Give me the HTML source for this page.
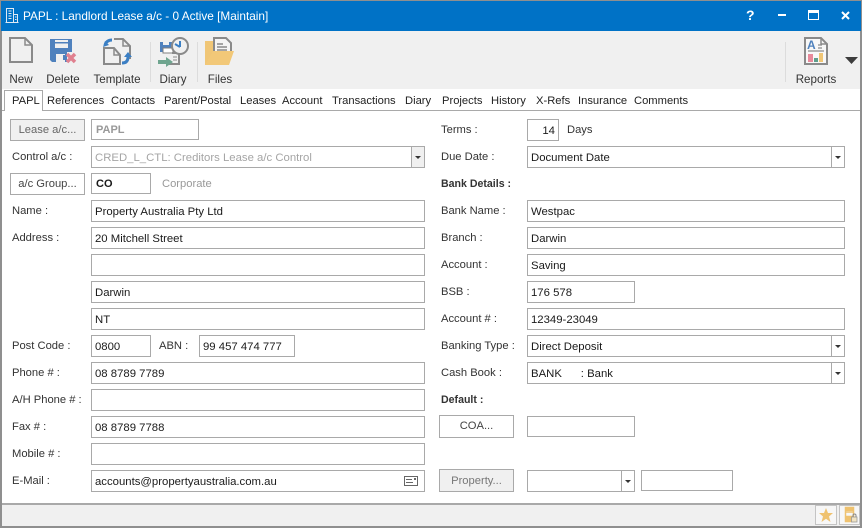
<!DOCTYPE html>
<html><head><meta charset="utf-8">
<style>
html,body{margin:0;padding:0;background:#fff}
#w{position:relative;width:862px;height:528px;overflow:hidden;background:#fff;font-family:"Liberation Sans",sans-serif;font-size:11.2px;color:#222}
#w div{position:absolute;box-sizing:border-box;white-space:pre}
#w svg{position:absolute;overflow:visible}
.l{color:#333;height:16px;line-height:16px}
.i{border:1px solid #a9a9a9;background:#fff;padding-left:3px;color:#1a1a1a;line-height:22px;font-size:11.35px}
.b{border:1px solid #a9a9a9;background:#fff;text-align:center;color:#444;line-height:20px}
.t{height:16px;line-height:16px;color:#222;top:93px}
.c{color:#333;text-align:center;height:16px;line-height:16px;top:72px;font-size:11.6px}
.a{width:13px;top:0;bottom:0;right:0;border-left:1px solid #a9a9a9}
.a:after{content:"";position:absolute;left:3px;top:9px;border:3px solid transparent;border-top:3px solid #333;border-bottom:0}
</style></head><body><div id="w">
<div style="left:0;top:0;width:862px;height:528px;border:2px solid #8f8f8f;border-top:1px solid #8f8f8f"></div>
<div style="left:1px;top:1px;width:860px;height:30px;background:#0072c6"></div>
<svg style="left:5px;top:8px" width="14" height="15" viewBox="0 0 14 15" fill="none" stroke="#dfeaf5" stroke-width="1"><path d="M1.5 14.5V.5H8.5V14.5M8.5 6.5H12.5V14.5M.5 14.5H13.5M3.5 3H6.5M3.5 5.5H6.5M3.5 8H6.5M3.5 10.500H6.5M10 9H11.500M10 11.500H11.500"/></svg>
<div style="left:23px;top:8px;height:16px;line-height:16px;color:#fff;font-size:11.8px">PAPL : Landlord Lease a/c - 0 Active [Maintain]</div>
<div style="left:746px;top:6px;color:#fff;font-weight:bold;font-size:14px;height:18px;line-height:18px">?</div>
<div style="left:778px;top:14px;width:8px;height:2px;background:#fff"></div>
<div style="left:808px;top:10px;width:11px;height:10px;border:1px solid #fff;border-top:3px solid #fff"></div>
<svg style="left:841px;top:11px" width="9" height="9"><path d="M1 1L8 8M8 1L1 8" stroke="#fff" stroke-width="2"/></svg>

<div style="left:2px;top:31px;width:858px;height:58px;background:#f0f0f0"></div>
<!-- New -->
<svg style="left:9px;top:37px" width="24" height="26" fill="none"><path d="M1 1H16L23 8V25H1Z" stroke="#8a8a8a" stroke-width="2"/><path d="M16 1V8H23" stroke="#8a8a8a" stroke-width="1.500"/></svg>
<div class="c" style="left:1px;width:40px">New</div>
<!-- Delete -->
<svg style="left:50px;top:38px" width="27" height="27"><path d="M0 1H22V14H17V24H2L0 22Z" fill="#4f81bd"/><rect x="5" y="2" width="13" height="8" fill="#f0f0f0"/><rect x="5" y="4" width="13" height="1.500" fill="#4f81bd"/><rect x="6" y="16" width="9" height="8" fill="#f0f0f0"/><rect x="13" y="17" width="2" height="5" fill="#4f81bd"/><path d="M17 16L25 24M25 16L17 24" stroke="#e0808f" stroke-width="3.500"/></svg>
<div class="c" style="left:43px;width:40px">Delete</div>
<!-- Template -->
<svg style="left:102px;top:37px" width="30" height="30" fill="none"><path d="M12 2H21L28 9V22" stroke="#8a8a8a" stroke-width="2"/><path d="M21 2V9H28" stroke="#8a8a8a" stroke-width="1.500"/><path d="M2 11V27H18V18L12 11Z" stroke="#8a8a8a" stroke-width="2"/><path d="M12 11V18H18" stroke="#8a8a8a" stroke-width="1.500"/><path d="M1 10L7 8L3 4Z" fill="#3b7fc4"/><path d="M10 3C6 3 4 5 3 8" stroke="#3b7fc4" stroke-width="3"/><path d="M20 26C24 26 26 24 26 20" stroke="#3b7fc4" stroke-width="3"/><path d="M22 20L26 15L30 20Z" fill="#3b7fc4"/></svg>
<div class="c" style="left:87px;width:60px">Template</div>
<div style="left:150px;top:42px;width:1px;height:40px;background:#dcdcdc"></div>
<!-- Diary -->
<svg style="left:158px;top:37px" width="31" height="30" fill="none"><path d="M2 5H14V15H2Z" fill="#4f81bd"/><rect x="5" y="5" width="6" height="3" fill="#f0f0f0"/><rect x="5" y="11" width="10" height="5" fill="#fff" stroke="#7f7f7f"/><path d="M14 16H21V27H11" stroke="#8a8a8a" stroke-width="2"/><path d="M15 20H19M15 23H19" stroke="#8a8a8a"/><circle cx="22" cy="9" r="8" fill="#f0f0f0" stroke="#8a8a8a" stroke-width="2"/><path d="M22 10V4M22 10L17 7" stroke="#3b7fc4" stroke-width="2"/><path d="M0 23H8V20L15 25L8 30V27H0Z" fill="#6fa58f"/></svg>
<div class="c" style="left:153px;width:40px">Diary</div>
<div style="left:197px;top:42px;width:1px;height:40px;background:#dcdcdc"></div>
<!-- Files -->
<svg style="left:205px;top:37px" width="30" height="30"><path d="M0 4H8V28H0Z" fill="#f0c676"/><path d="M9 1H21L26 6V17H9Z" fill="#f4f4f4" stroke="#8a8a8a" stroke-width="2"/><path d="M12 7H18M12 10H22M12 13H22" stroke="#8a8a8a" stroke-width="1.500"/><path d="M8 28L0 28L8 14H29L24 28Z" fill="#f2c878"/></svg>
<div class="c" style="left:200px;width:40px">Files</div>
<div style="left:785px;top:42px;width:1px;height:40px;background:#dcdcdc"></div>
<!-- Reports -->
<svg style="left:804px;top:37px" width="24" height="28" fill="none"><path d="M1 1H17L23 7V27H1Z" fill="#f8f8f8" stroke="#8a8a8a" stroke-width="2"/><path d="M17 1V7H23" stroke="#8a8a8a" stroke-width="1.500"/><text x="3" y="12" font-family="Liberation Sans" font-size="12" font-weight="bold" fill="#4f81bd">A</text><path d="M14 8H18M14 11H18M4 14H20" stroke="#8a8a8a" stroke-width="1.300"/><rect x="4" y="17" width="5" height="8" fill="#e88a9b"/><rect x="10" y="21" width="4" height="4" fill="#5f9e8c"/><rect x="15" y="16" width="4" height="9" fill="#f0c676"/></svg>
<div class="c" style="left:791px;width:50px">Reports</div>
<svg style="left:845px;top:57px" width="13" height="7"><path d="M0 0H13L6.500 7Z" fill="#3c3c3c"/></svg>

<!-- tabs -->
<div style="left:2px;top:110px;width:858px;height:1px;background:#a9a9a9"></div>
<div style="left:4px;top:90px;width:39px;height:21px;background:#fff;border:1px solid #a9a9a9;border-bottom:0"></div>
<div class="t" style="left:12px">PAPL</div>
<div class="t" style="left:47px">References</div>
<div class="t" style="left:111px">Contacts</div>
<div class="t" style="left:164px">Parent/Postal</div>
<div class="t" style="left:240px">Leases</div>
<div class="t" style="left:282px">Account</div>
<div class="t" style="left:332px">Transactions</div>
<div class="t" style="left:405px">Diary</div>
<div class="t" style="left:442px">Projects</div>
<div class="t" style="left:491px">History</div>
<div class="t" style="left:536px">X-Refs</div>
<div class="t" style="left:578px">Insurance</div>
<div class="t" style="left:634px">Comments</div>

<!-- left column -->
<div class="b" style="left:10px;top:119px;width:75px;height:22px;background:#f0f0f0;color:#666">Lease a/c...</div>
<div class="i" style="left:91px;top:119px;width:108px;height:21px;color:#999;font-weight:bold;font-size:11px;padding-left:4px;line-height:20px">PAPL</div>
<div class="l" style="left:12px;top:149px">Control a/c :</div>
<div class="i" style="left:91px;top:146px;width:334px;height:22px;color:#a5a5a5">CRED_L_CTL: Creditors Lease a/c Control<div class="a" style="background:#f0f0f0"></div></div>
<div class="b" style="left:10px;top:173px;width:75px;height:22px">a/c Group...</div>
<div class="i" style="left:91px;top:173px;width:60px;height:21px;font-weight:bold;font-size:11px;padding-left:4px;line-height:20px">CO</div>
<div class="l" style="left:162px;top:176px;color:#999">Corporate</div>
<div class="l" style="left:12px;top:203px">Name :</div>
<div class="i" style="left:91px;top:200px;width:334px;height:22px">Property Australia Pty Ltd</div>
<div class="l" style="left:12px;top:230px">Address :</div>
<div class="i" style="left:91px;top:227px;width:334px;height:22px">20 Mitchell Street</div>
<div class="i" style="left:91px;top:254px;width:334px;height:22px"></div>
<div class="i" style="left:91px;top:281px;width:334px;height:22px">Darwin</div>
<div class="i" style="left:91px;top:308px;width:334px;height:22px">NT</div>
<div class="l" style="left:12px;top:338px">Post Code :</div>
<div class="i" style="left:91px;top:335px;width:60px;height:22px">0800</div>
<div class="l" style="left:159px;top:338px">ABN :</div>
<div class="i" style="left:199px;top:335px;width:96px;height:22px">99 457 474 777</div>
<div class="l" style="left:12px;top:365px">Phone # :</div>
<div class="i" style="left:91px;top:362px;width:334px;height:22px">08 8789 7789</div>
<div class="l" style="left:12px;top:392px">A/H Phone # :</div>
<div class="i" style="left:91px;top:389px;width:334px;height:22px"></div>
<div class="l" style="left:12px;top:419px">Fax # :</div>
<div class="i" style="left:91px;top:416px;width:334px;height:22px">08 8789 7788</div>
<div class="l" style="left:12px;top:446px">Mobile # :</div>
<div class="i" style="left:91px;top:443px;width:334px;height:22px"></div>
<div class="l" style="left:12px;top:473px">E-Mail :</div>
<div class="i" style="left:91px;top:470px;width:334px;height:22px">accounts@propertyaustralia.com.au</div>
<svg style="left:404px;top:476px" width="14" height="10" fill="none" stroke="#666"><rect x=".5" y=".5" width="13" height="9"/><path d="M2 3.500H8M2 6.500H9"/><rect x="10" y="2" width="2" height="2" fill="#666" stroke="none"/></svg>

<!-- right column -->
<div class="l" style="left:441px;top:122px">Terms :</div>
<div class="i" style="left:527px;top:119px;width:32px;height:22px;text-align:right;padding:0 3px 0 0">14</div>
<div class="l" style="left:567px;top:122px">Days</div>
<div class="l" style="left:441px;top:149px">Due Date :</div>
<div class="i" style="left:527px;top:146px;width:318px;height:22px">Document Date<div class="a"></div></div>
<div class="l" style="left:441px;top:176px;font-weight:bold;font-size:10.6px">Bank Details :</div>
<div class="l" style="left:441px;top:203px">Bank Name :</div>
<div class="i" style="left:527px;top:200px;width:318px;height:22px">Westpac</div>
<div class="l" style="left:441px;top:230px">Branch :</div>
<div class="i" style="left:527px;top:227px;width:318px;height:22px">Darwin</div>
<div class="l" style="left:441px;top:257px">Account :</div>
<div class="i" style="left:527px;top:254px;width:318px;height:22px">Saving</div>
<div class="l" style="left:441px;top:284px">BSB :</div>
<div class="i" style="left:527px;top:281px;width:108px;height:22px">176 578</div>
<div class="l" style="left:441px;top:311px">Account # :</div>
<div class="i" style="left:527px;top:308px;width:318px;height:22px">12349-23049</div>
<div class="l" style="left:441px;top:338px">Banking Type :</div>
<div class="i" style="left:527px;top:335px;width:318px;height:22px">Direct Deposit<div class="a"></div></div>
<div class="l" style="left:441px;top:365px">Cash Book :</div>
<div class="i" style="left:527px;top:362px;width:318px;height:22px">BANK      : Bank<div class="a"></div></div>
<div class="l" style="left:441px;top:392px;font-weight:bold;font-size:10.6px">Default :</div>
<div class="b" style="left:439px;top:415px;width:75px;height:23px;line-height:21px">COA...</div>
<div class="i" style="left:527px;top:416px;width:108px;height:21px"></div>
<div class="b" style="left:439px;top:469px;width:75px;height:23px;background:#f0f0f0;color:#777;line-height:22px">Property...</div>
<div class="i" style="left:527px;top:470px;width:108px;height:22px"><div class="a"></div></div>
<div class="i" style="left:641px;top:470px;width:92px;height:21px"></div>

<!-- status bar -->
<div style="left:2px;top:503px;width:858px;height:2px;background:#a9a9a9"></div>
<div style="left:2px;top:505px;width:858px;height:21px;background:#f0f0f0"></div>
<div style="left:815px;top:505px;width:22px;height:20px;border:1px solid #c4c4c4;background:#f7f7f7"></div>
<svg style="left:819px;top:508px" width="14" height="14"><path d="M7 0L9 5H14L10 8.500L11.500 14L7 10.800L2.500 14L4 8.500L0 5H5Z" fill="#efc26f"/></svg>
<div style="left:839px;top:505px;width:21px;height:20px;border:1px solid #c4c4c4;background:#f7f7f7"></div>
<svg style="left:845px;top:507px" width="13" height="16" fill="none"><path d="M0.500 0.500H8.500V14.500H0.500ZM0.500 5H8.500M0.500 9.500H8.500" stroke="#efc26f" stroke-width="1.500"/><rect x="1" y="1" width="7" height="3" fill="#efc26f"/><rect x="1" y="10" width="7" height="4" fill="#efc26f"/><rect x="6.500" y="10" width="5.500" height="5" fill="#f0e3c4" stroke="#999" stroke-width=".8"/><path d="M8 10V8.500A1.500 1.500 0 0 1 11 8.500V10" stroke="#888"/></svg>
</div></body></html>
